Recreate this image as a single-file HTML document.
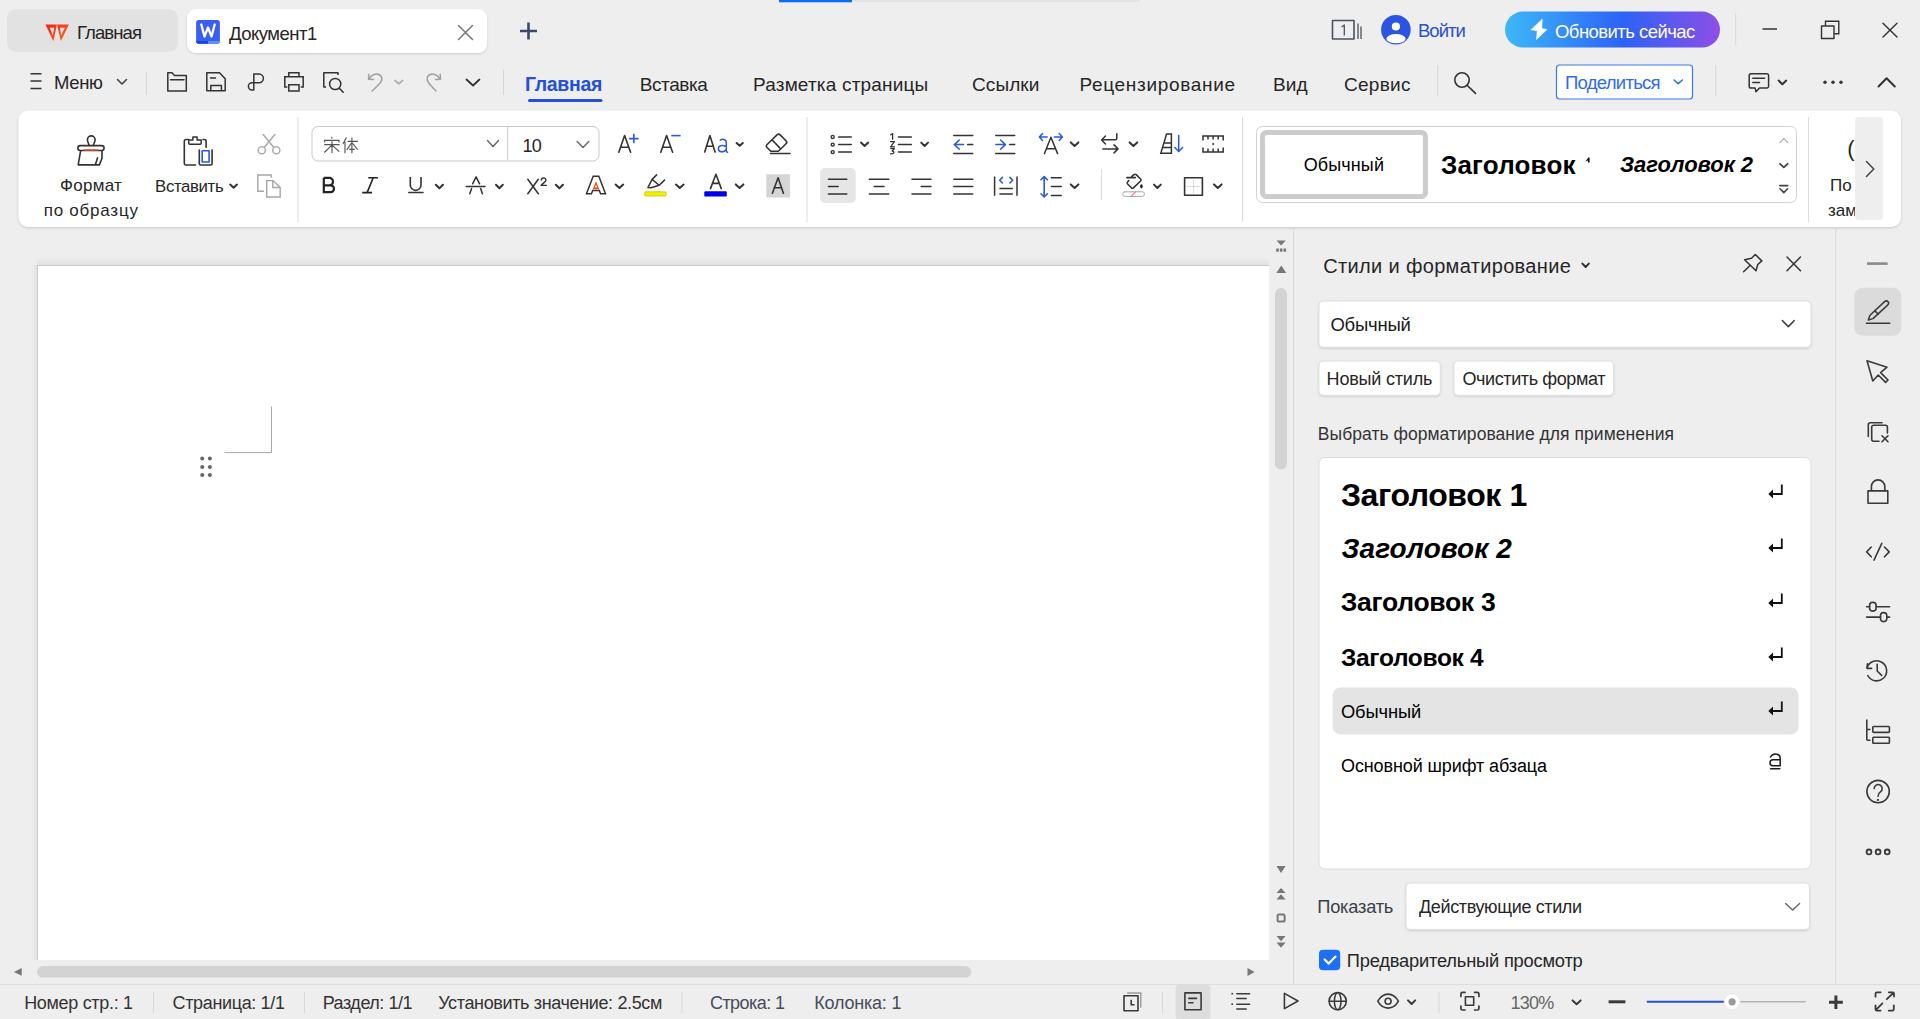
<!DOCTYPE html>
<html><head><meta charset="utf-8"><style>
html,body{margin:0;padding:0;width:1920px;height:1019px;overflow:hidden;background:#eeeeee}
svg{position:absolute;left:0;top:0;display:block}
text{font-family:"Liberation Sans", sans-serif}
</style></head><body>
<svg width="1920" height="1019" viewBox="0 0 1920 1019">
<defs>
  <filter id="sh" x="-5%" y="-20%" width="110%" height="140%">
    <feGaussianBlur in="SourceAlpha" stdDeviation="1.5"/>
    <feOffset dy="1" result="b"/>
    <feComponentTransfer><feFuncA type="linear" slope="0.18"/></feComponentTransfer>
    <feMerge><feMergeNode/><feMergeNode in="SourceGraphic"/></feMerge>
  </filter>
  <filter id="sh2" x="-10%" y="-30%" width="120%" height="160%">
    <feGaussianBlur in="SourceAlpha" stdDeviation="0.8"/>
    <feOffset dy="0.6" result="b"/>
    <feComponentTransfer><feFuncA type="linear" slope="0.15"/></feComponentTransfer>
    <feMerge><feMergeNode/><feMergeNode in="SourceGraphic"/></feMerge>
  </filter>
  <linearGradient id="upd" x1="0" x2="1" y1="0" y2="0">
    <stop offset="0" stop-color="#3cb8f8"/>
    <stop offset="0.55" stop-color="#2d62f6"/>
    <stop offset="1" stop-color="#8d4fe6"/>
  </linearGradient>
  <linearGradient id="wps" x1="0" x2="1" y1="0" y2="1">
    <stop offset="0" stop-color="#f5221b"/>
    <stop offset="1" stop-color="#ff6a1a"/>
  </linearGradient>
  <linearGradient id="pgsh" x1="0" x2="0" y1="0" y2="1">
    <stop offset="0" stop-color="#e4e4e4"/>
    <stop offset="1" stop-color="#eeeeee"/>
  </linearGradient>
  <clipPath id="clipR"><rect x="1812" y="112" width="43" height="112"/></clipPath>
</defs>
<rect x="0" y="0" width="1920" height="1019" fill="#eeeeee"/>
<!-- progress -->
<rect x="779" y="0" width="73" height="2.3" fill="#0b6ef2"/>
<rect x="852" y="0" width="288" height="2" fill="#e3e3e3"/>
<!-- tabs -->
<rect x="7" y="9" width="171" height="43" rx="9" fill="#e2e2e2"/>
<rect x="187" y="9" width="300" height="44" rx="9" fill="#ffffff" filter="url(#sh2)"/>
<!-- ribbon -->
<rect x="18.5" y="110.5" width="1882.5" height="116.5" rx="10" fill="#ffffff" filter="url(#sh)"/>
<!-- doc page -->
<linearGradient id="pgTop" x1="0" x2="0" y1="0" y2="1"><stop offset="0" stop-color="#eeeeee"/><stop offset="1" stop-color="#e2e2e2"/></linearGradient>
<linearGradient id="pgLeft" x1="0" x2="1" y1="0" y2="0"><stop offset="0" stop-color="#eeeeee"/><stop offset="1" stop-color="#e2e2e2"/></linearGradient>
<rect x="37" y="257" width="1232" height="8" fill="url(#pgTop)"/>
<rect x="31" y="265" width="6" height="695" fill="url(#pgLeft)"/>
<rect x="37" y="265" width="1232" height="1" fill="#c9c9c9"/>
<rect x="37" y="265" width="1" height="695" fill="#cbcbcb"/>
<rect x="38" y="266" width="1231" height="694" fill="#ffffff"/>
<!-- v scrollbar -->
<rect x="1275" y="288" width="12" height="181.4" rx="6" fill="#d3d3d3"/>
<!-- h scrollbar -->
<rect x="37" y="966" width="934.4" height="11.6" rx="5.8" fill="#d3d3d3"/>
<!-- separators -->
<rect x="1293" y="227" width="1" height="757" fill="#d9d9d9"/>
<rect x="1835.2" y="227" width="1" height="757" fill="#dadada"/>
<rect x="0" y="984" width="1920" height="1" fill="#dcdcdc"/>
<!-- ribbon separators -->
<rect x="297.5" y="117" width="1" height="105" fill="#dcdcdc"/>
<rect x="806.5" y="117" width="1" height="105" fill="#dcdcdc"/>
<rect x="1242" y="117" width="1" height="105" fill="#dcdcdc"/>
<rect x="1808" y="117" width="1" height="105" fill="#dcdcdc"/>
<rect x="1101" y="169" width="1" height="31" fill="#dddddd"/>
<!-- row2 separators -->
<rect x="146" y="72" width="1" height="23" fill="#d6d6d6"/>
<rect x="503" y="70" width="1" height="25" fill="#d6d6d6"/>
<rect x="1437.2" y="65" width="1" height="31" fill="#d6d6d6"/>
<rect x="1715.2" y="65" width="1" height="31" fill="#d6d6d6"/>
<rect x="1735.2" y="13" width="1" height="32" fill="#d6d6d6"/>
<!-- status separators -->
<rect x="153" y="992" width="1" height="21" fill="#d8d8d8"/>
<rect x="304" y="992" width="1" height="21" fill="#d8d8d8"/>
<rect x="681.5" y="992" width="1" height="21" fill="#d8d8d8"/>
<rect x="1162" y="992" width="1" height="21" fill="#d8d8d8"/>
<rect x="1438.5" y="992" width="1" height="21" fill="#d8d8d8"/>
<!-- font combo -->
<rect x="312" y="126.5" width="287" height="34.5" rx="6" fill="#ffffff" stroke="#c9c9c9" stroke-width="1"/>
<rect x="507.2" y="127" width="1" height="33.5" fill="#c9c9c9"/>
<!-- align-left highlight -->
<rect x="820" y="168" width="35.7" height="35" rx="5" fill="#e6e6e6"/>
<!-- shaded A bg -->
<rect x="766.3" y="174.2" width="23.7" height="23.3" fill="#d5d5d5"/>
<!-- gallery -->
<rect x="1256.5" y="126.5" width="540" height="76" rx="6" fill="#ffffff" stroke="#d2d2d2" stroke-width="1"/>
<rect x="1262.5" y="132.5" width="163" height="64" rx="4" fill="#ffffff" stroke="#cccccc" stroke-width="5"/>
<!-- ribbon scroll btn -->
<rect x="1855" y="117" width="28" height="103" rx="4" fill="#eeeeee"/>
<!-- update btn -->
<rect x="1505" y="11.6" width="215" height="36" rx="18" fill="url(#upd)"/>
<!-- share btn -->
<rect x="1556.5" y="65" width="136" height="34" rx="3" fill="#ffffff" stroke="#3a78f2" stroke-width="1.2"/>
<!-- panel dropdown -->
<rect x="1319" y="301" width="492" height="46.2" rx="4" fill="#ffffff" stroke="#dddddd" stroke-width="1" filter="url(#sh2)"/>
<rect x="1319" y="361" width="121.3" height="34.2" rx="4" fill="#ffffff" stroke="#e0e0e0" stroke-width="1" filter="url(#sh2)"/>
<rect x="1454" y="361" width="159.5" height="34.2" rx="4" fill="#ffffff" stroke="#e0e0e0" stroke-width="1" filter="url(#sh2)"/>
<rect x="1319" y="457.5" width="492" height="411.5" rx="6" fill="#ffffff" stroke="#dcdcdc" stroke-width="1"/>
<rect x="1332.6" y="687.4" width="466" height="47" rx="8" fill="#e4e4e4"/>
<rect x="1406" y="883" width="403.6" height="46.4" rx="4" fill="#ffffff" stroke="#dddddd" stroke-width="1" filter="url(#sh2)"/>
<rect x="1319" y="949.7" width="21.2" height="20.5" rx="4" fill="#1d6ff5"/>
<!-- right sidebar highlight -->
<rect x="1854.4" y="287.8" width="46.8" height="47.9" rx="8" fill="#dbdbdb"/>
<!-- status highlight -->
<rect x="1175.5" y="985" width="35" height="34" rx="4" fill="#dddddd"/>

<g fill="none" stroke-linecap="round" stroke-linejoin="round">
<!-- WPS logo -->
<path d="M45.4,24.4 H56.9 L53.4,41.2 Z M49.8,27.7 L52.8,35.4 L54.3,27.7 Z M57.1,24.4 H68.9 L60.8,41.2 Z M60,27.7 L61.1,35.6 L64.9,27.7 Z" fill="url(#wps)" fill-rule="evenodd" stroke="none"/>
<!-- W doc icon -->
<rect x="196.1" y="20.1" width="23.8" height="23.7" rx="2.8" fill="#3b5ff6" stroke="none"/>
<path d="M196.1,41 H208 V43.8 H199 A2.8,2.8 0 0 1 196.1,41 Z" fill="#1747dc" stroke="none"/>
<path d="M208,41 H219.9 A2.8,2.8 0 0 1 217,43.8 H208 Z" fill="#5b93fa" stroke="none"/>
<path d="M201.3,24.5 L204.5,36.5 L208,27.5 L211.5,36.5 L214.7,24.5" stroke="#ffffff" stroke-width="2.3"/>
<!-- tab close -->
<path d="M458.5,25.5 L472.5,39.5 M472.5,25.5 L458.5,39.5" stroke="#777777" stroke-width="1.5"/>
<!-- plus -->
<path d="M528.5,22.5 V39.5 M520,31 H537" stroke="#3b4a66" stroke-width="2.6" stroke-linecap="butt"/>
<!-- hamburger -->
<path d="M30.5,73.8 H41.5 M30.5,81 H41.5 M30.5,88.5 H41.5" stroke="#333333" stroke-width="1.6" stroke-linecap="butt"/>
<path d="M117.5,79.5 L122,84 L126.5,79.5" stroke="#444444" stroke-width="1.6"/>
<!-- folder -->
<path d="M167.8,91 V72.8 H172 L174.5,75.5 H186.3 V91 Z M170.5,79.8 H184" stroke="#333333" stroke-width="1.5"/>
<!-- save -->
<path d="M206.8,72.8 H219.5 L225.2,78.8 V90.8 H206.8 Z M210.8,90.8 V85.6 H221.4 V90.8 M210.5,78 H215.5" stroke="#333333" stroke-width="1.5"/>
<!-- link -->
<path d="M253.8,90 V73.9 H259 A4.4,4.4 0 0 1 259,82.7 H252 A3.6,3.6 0 0 0 252,89.9 H253.8" stroke="#333333" stroke-width="1.5"/>
<!-- print -->
<path d="M286.8,87 H284.8 V76.8 H303.2 V87 H301.2 M288.8,76.8 V72.8 H299 V76.8 M288.8,84.8 H299 V91 H288.8 Z" stroke="#333333" stroke-width="1.5" stroke-linejoin="miter"/>
<!-- preview -->
<path d="M338,75 V72.8 H323.8 V87 H326" stroke="#333333" stroke-width="1.5" stroke-linecap="butt"/>
<circle cx="335.2" cy="84" r="5.6" stroke="#333333" stroke-width="1.5"/>
<path d="M339.3,88.2 L343.2,92.2" stroke="#333333" stroke-width="1.6"/>
<!-- undo -->
<path d="M369.5,78.5 C372,73.5 379,72.5 381.5,77 C383,80 381,83 372,91 M368.8,74.3 L368.5,79.3 L373.5,79.5" stroke="#a0a0a0" stroke-width="1.5"/>
<path d="M395,80.5 L398.8,83.8 L402.5,80.5" stroke="#b0b0b0" stroke-width="1.8"/>
<!-- redo -->
<path d="M439.5,78.5 C437,73.5 430,72.5 427.5,77 C426,80 428,83 436,91 M440.2,74.3 L440.5,79.3 L435.5,79.5" stroke="#a0a0a0" stroke-width="1.5"/>
<path d="M466.5,79.5 L473,85.5 L479.5,79.5" stroke="#333333" stroke-width="1.8"/>
<!-- ribbon tab underline -->
<rect x="528" y="99" width="74.5" height="3" rx="1.5" fill="#2350d8" stroke="none"/>
</g>
<g fill="none" stroke-linecap="round" stroke-linejoin="round" stroke="#333333" stroke-width="1.5">
<!-- ===== top right ===== -->
<rect x="1332.5" y="20.5" width="21.5" height="18.5" stroke="#4a5262" stroke-width="1.6"/>
<path d="M1358,23.5 V39 M1361,26.5 V39" stroke="#4a5262" stroke-width="1.3" stroke-linecap="butt"/>
<path d="M1341.5,27 L1344.3,25 V35.5" stroke="#4a5262" stroke-width="1.3" stroke-linecap="butt"/>
<circle cx="1395.9" cy="29.8" r="14.8" fill="#2b55e0" stroke="none"/>
<circle cx="1395.9" cy="26.5" r="4.1" fill="#ffffff" stroke="none"/>
<ellipse cx="1396" cy="38.7" rx="9.6" ry="4.6" fill="#ffffff" stroke="none"/>
<path d="M1542.2,19.5 L1541.8,28.5 L1547,29.5 L1536.5,39.5 L1537.2,30.8 L1531.2,29.8 Z" fill="#ffffff" stroke="#ffffff" stroke-width="0.6"/>
<path d="M1762.5,29 H1777" stroke="#333333" stroke-width="1.5" stroke-linecap="butt"/>
<path d="M1825.5,25.8 V21.3 H1838.8 V33.8 H1834.2" stroke="#333333" stroke-width="1.4" stroke-linecap="butt" stroke-linejoin="miter"/>
<rect x="1821.5" y="26" width="12.5" height="12.5" stroke="#333333" stroke-width="1.4"/>
<path d="M1883,23.2 L1897,37 M1897,23.2 L1883,37" stroke="#333333" stroke-width="1.4"/>
<!-- share chevron -->
<path d="M1674,80 L1678.2,83.6 L1682.4,80" stroke="#2f6bf0" stroke-width="1.5"/>
<!-- search -->
<circle cx="1462" cy="80" r="7.2" stroke="#333333" stroke-width="1.6"/>
<path d="M1467.3,85.5 L1475.5,93.3" stroke="#333333" stroke-width="1.7"/>
<!-- comment -->
<path d="M1751,73.8 H1766.8 A1.8,1.8 0 0 1 1768.6,75.6 V86.3 A1.8,1.8 0 0 1 1766.8,88.1 H1759.5 L1756,91.8 L1755.1,88.1 H1751 A1.8,1.8 0 0 1 1749.2,86.3 V75.6 A1.8,1.8 0 0 1 1751,73.8 Z" stroke-width="1.5"/>
<path d="M1752.8,78.2 H1764.6 M1752.8,82.5 H1759.5" stroke-width="1.5"/>
<path d="M1778.6,80.6 L1782.4,84.2 L1786.2,80.6" stroke-width="2"/>
<circle cx="1825" cy="82.2" r="1.7" fill="#333333" stroke="none"/>
<circle cx="1833" cy="82.2" r="1.7" fill="#333333" stroke="none"/>
<circle cx="1841" cy="82.2" r="1.7" fill="#333333" stroke="none"/>
<path d="M1878.5,86.5 L1886.6,78.3 L1894.8,86.5" stroke-width="2"/>

<!-- ===== ribbon clipboard ===== -->
<path d="M89.3,145.5 C88.2,143 87.4,141.3 87.4,139.7 A3.85,3.85 0 0 1 95.1,139.7 C95.1,141.3 94.3,143 93.2,145.5" stroke-width="1.6"/>
<path d="M80.3,145.6 H101.6 A2.45,2.45 0 0 1 101.6,150.5 H80.3 A2.45,2.45 0 0 1 80.3,145.6 Z" stroke-width="1.6"/>
<path d="M84,150 H98" stroke="#e0561b" stroke-width="1.3"/>
<path d="M80.6,150.8 L78.2,164.9 H99.4 L102,158.3 V150.8 M97.6,157.8 L95.4,164.6" stroke-width="1.6"/>
<path d="M195.5,165 H186 A1.7,1.7 0 0 1 184.3,163.3 V141.2 A1.7,1.7 0 0 1 186,139.5 H188.4 M203,139.5 H204.5 A1.6,1.6 0 0 1 206.1,141.1 V147.3" stroke-width="1.6"/>
<path d="M188.8,140 H192.9 V137 H197.1 V140 H201.2 V143.3 A0.9,0.9 0 0 1 200.3,144.2 H189.7 A0.9,0.9 0 0 1 188.8,143.3 Z" stroke-width="1.5"/>
<path d="M199.3,150 V163.4 A1.6,1.6 0 0 0 200.9,165 H210.5 A1.6,1.6 0 0 0 212.1,163.4 V150" stroke-width="1.6"/>
<rect x="202.2" y="150.8" width="6.9" height="11.2" stroke="#2a57ea" stroke-width="1.6"/>
<circle cx="261.8" cy="150.2" r="3.6" stroke="#a6a6a6" stroke-width="1.4"/>
<circle cx="276.3" cy="150.2" r="3.6" stroke="#a6a6a6" stroke-width="1.4"/>
<path d="M263.2,134.5 L273.6,147.2 M274.8,134.5 L264.4,147.2" stroke="#a6a6a6" stroke-width="1.4"/>
<path d="M264,191.2 H257.8 V175 H271.2 V177.8" stroke="#a6a6a6" stroke-width="1.4" stroke-linecap="butt" stroke-linejoin="miter"/>
<path d="M266.7,180.6 H273.2 L280.2,187.6 V197 H266.7 Z M272.8,180.8 V187.5 H280" stroke="#a6a6a6" stroke-width="1.4" stroke-linejoin="miter"/>

<path d="M230.2,184.6 L233.6,187.8 L237,184.6" stroke-width="2"/>
<!-- ===== font group ===== -->
<path d="M487.5,140.5 L493,146.5 L498.5,140.5" stroke="#666666" stroke-width="1.4"/>
<path d="M577.2,141.5 L583,147.5 L588.8,141.5" stroke="#666666" stroke-width="1.4"/>
<path d="M618.8,152.3 L624.6,135.6 L630.6,152.3 M621,147.2 H628.3" stroke-width="1.6"/>
<path d="M633.8,133.8 V143.3 M629,138.6 H638.6" stroke="#2a57ea" stroke-width="1.6" stroke-linecap="butt"/>
<path d="M660.8,152.3 L666.6,135.6 L672.6,152.3 M663,147.2 H670.3" stroke-width="1.6"/>
<path d="M671.3,135.6 H680.6" stroke="#2a57ea" stroke-width="1.6" stroke-linecap="butt"/>
<path d="M704.7,152 L709.9,135.6 L715.1,152 M706.5,146.2 H713.3" stroke-width="1.6"/>
<path d="M720.3,140.2 C721.8,138.8 726.2,138.8 726.3,142.5 V150.4 C726.3,151.8 727,152.2 727.6,152.2 M726.3,146.5 C722,144.6 718.4,145.5 718.4,148.8 C718.4,152.5 723.8,153 726.3,149.5" stroke="#2a57ea" stroke-width="1.5"/>
<path d="M736.6,143 L739.7,145.8 L742.8,143" stroke-width="2"/>
<path d="M777,134.9 Q778.6,133.4 780.2,134.9 L786,140.7 Q787.5,142.3 786,143.8 L778.4,151.2 H770.8 L767.1,147.5 Q765.6,146 767.1,144.5 Z M772.3,140 L779.7,147.9" stroke-width="1.6"/>
<path d="M770.5,153.6 H790" stroke-width="1.5"/>
<!-- row 2 -->
<path d="M323.8,177.8 V192.2 H330.6 A3.3,3.3 0 0 0 330.6,185.4 H323.8 M323.8,177.8 H329.2 A3.8,3.8 0 0 1 329.2,185.4" stroke="#222222" stroke-width="2.2" stroke-linejoin="miter" stroke-linecap="butt"/>
<path d="M368.3,177.8 H378 M362.2,192.6 H372 M373.2,177.8 L367.1,192.6" stroke="#222222" stroke-width="1.6" stroke-linecap="butt"/>
<path d="M410.3,177 V185 A5.35,5.35 0 0 0 421,185 V177" stroke-width="1.6" stroke-linecap="butt"/>
<path d="M408.8,192.4 H423" stroke-width="1.5"/>
<path d="M435.8,184.8 L439.4,188.2 L443,184.8" stroke-width="2"/>
<path d="M472.6,183.8 L476.1,176.8 L479.6,183.8 M466.2,186.6 H485 M471.6,188.6 L469.8,193.8 M480.6,188.6 L482.4,193.8" stroke-width="1.5"/>
<path d="M496,184.8 L499.4,188.2 L502.8,184.8" stroke-width="2"/>
<path d="M527.8,179.3 L538.3,193.8 M538.3,179.3 L527.8,193.8" stroke-width="1.5"/>
<path d="M541.3,180 C541.3,177.3 546,177.2 546,180 C546,182 542.5,183.3 541.1,185.4 H546.3" stroke-width="1.4"/>
<path d="M555.8,184.8 L559.4,188.2 L563,184.8" stroke-width="2"/>
<path d="M593.2,176.2 H598.8 L605.5,193.8 H600.6 L599.3,190.5 H592.7 L591.4,193.8 H586.5 Z" stroke-width="1.5" stroke-linejoin="miter"/>
<path d="M596,181.3 L599.3,189.2 H592.7 Z" fill="#e05a1c" stroke="none"/>
<rect x="595.2" y="185.6" width="1.7" height="1.9" fill="#ffffff" stroke="none"/>
<path d="M615.6,184.6 L619.4,188 L623.2,184.6" stroke-width="2"/>
<path d="M656.6,174.9 L652.1,179.4 L647.9,187.6 L651.2,187.8 L659.1,185.3 L664.5,180.1 M652.1,179.4 L659.1,185.3" stroke-width="1.5"/>
<rect x="644.6" y="191.8" width="21.6" height="4.2" rx="1.5" fill="#f5f000" stroke="#c9c400" stroke-width="0.8"/>
<path d="M676,184.6 L679.8,188 L683.6,184.6" stroke-width="2"/>
<path d="M710.5,188.6 L715.9,174.3 L721.3,188.6 M712.3,183.4 H719.5" stroke-width="1.6"/>
<rect x="704.3" y="191.3" width="22.5" height="5.3" rx="1.2" fill="#0000e6" stroke="none"/>
<path d="M735.8,184.4 L739.6,188 L743.4,184.4" stroke-width="2"/>
<path d="M772.4,193.2 L778.1,177.8 L783.4,193.2 M774.2,187.8 H781.6" stroke-width="1.6"/>

<!-- ===== paragraph group ===== -->
<circle cx="832.7" cy="136.9" r="1.5" stroke-width="1.4"/>
<circle cx="832.7" cy="144.6" r="1.5" stroke-width="1.4"/>
<circle cx="832.7" cy="152.1" r="1.5" stroke-width="1.4"/>
<path d="M838.6,136.9 H851.3 M838.6,144.6 H851.3 M838.6,152.1 H851.3" stroke-width="1.5"/>
<path d="M861,142.6 L864.6,146 L868.2,142.6" stroke-width="2"/>
<path d="M890.8,134.8 L892.6,133.6 V139.2 M890.6,141.6 H894.4 L890.6,146.8 H894.6 M890.8,148.6 H894.4 L892.2,151 C894.6,151 894.8,154.3 890.6,153.8" stroke-width="1.3"/>
<path d="M898.4,136.9 H911.3 M898.4,144.6 H911.3 M898.4,152.1 H911.3" stroke-width="1.5"/>
<path d="M921.2,142.6 L924.6,146 L928,142.6" stroke-width="2"/>
<path d="M953.8,135.6 H972.7 M953.8,153.6 H972.7 M967.6,144.6 H972.7" stroke-width="1.5"/>
<path d="M954.2,144.6 H963.6 M959.3,140 L954.4,144.6 L959.3,149.2" stroke="#2a57ea" stroke-width="1.5"/>
<path d="M995.8,135.6 H1014.7 M995.8,153.6 H1014.7 M1009.6,144.6 H1014.7" stroke-width="1.5"/>
<path d="M995.8,144.6 H1005.2 M1000.6,140 L1005.4,144.6 L1000.6,149.2" stroke="#2a57ea" stroke-width="1.5"/>
<path d="M1039.3,137 H1047.2 M1042.5,133.6 L1039.3,137 L1042.5,140.4 M1054.4,137 H1062.4 M1059.2,133.6 L1062.4,137 L1059.2,140.4" stroke="#2a57ea" stroke-width="1.5"/>
<path d="M1044.5,153.6 L1050.9,137.2 L1057.6,153.6 M1046.6,148.8 H1055.4" stroke-width="1.5"/>
<path d="M1070.8,142.4 L1074.6,146 L1078.4,142.4" stroke-width="2"/>
<path d="M1116.8,133.8 V138.2 A1.6,1.6 0 0 1 1115.2,139.8 H1101.8 M1105.5,136 L1101.6,140 L1105.5,144 M1102.8,148.9 H1118 M1114,144.9 L1118,148.9 L1114,152.9" stroke-width="1.5"/>
<path d="M1129.6,142.4 L1133.4,146 L1137.2,142.4" stroke-width="2"/>
<path d="M1166.6,134 H1171.4 V153.3 H1160.8 Z M1163.8,142.9 H1171.4 M1162.8,147.6 H1171.4" stroke-width="1.5" stroke-linejoin="miter"/>
<path d="M1178.7,135.6 V151.6 M1174.8,147.6 L1178.7,151.6 L1182.6,147.6" stroke="#2a57ea" stroke-width="1.5"/>
<path d="M1203,140.5 V136 H1223.2 V140.5 M1203,147.5 V152 H1223.2 V147.5 M1208,136 V139.4 M1213.1,136 V139.4 M1218.2,136 V139.4 M1208,152 V148.6 M1213.1,152 V148.6 M1218.2,152 V148.6 M1213.1,143 V145" stroke-width="1.5" stroke-linecap="butt" stroke-linejoin="miter"/>
<path d="M828.4,179.2 H846.8 M828.4,186.6 H838.2 M828.4,194.1 H846.8" stroke-width="1.5"/>
<path d="M869.4,179.2 H888.8 M874.2,186.6 H884 M869.4,194.1 H888.8" stroke-width="1.5"/>
<path d="M912,179.2 H931 M921.2,186.6 H931 M912,194.1 H931" stroke-width="1.5"/>
<path d="M953.8,179.2 H972.7 M953.8,186.6 H972.7 M953.8,194.1 H972.7" stroke-width="1.5"/>
<path d="M994.6,176.4 V195.7 M1017,176.4 V195.7 M999.4,188.4 H1012.8 M999.4,194.1 H1012.8" stroke-width="1.5" stroke-linecap="butt"/>
<path d="M1002.4,177.4 L999.7,180.2 L1002.4,183 M1009.9,177.4 L1012.6,180.2 L1009.9,183" stroke="#2a57ea" stroke-width="1.6"/>
<path d="M1044.2,176.8 V196.8 M1041,179.8 L1044.2,176.6 L1047.4,179.8 M1041,193.8 L1044.2,197 L1047.4,193.8" stroke="#2a57ea" stroke-width="1.6"/>
<path d="M1051.4,177.8 H1061.2 M1051.4,186.6 H1061.2 M1051.4,195.4 H1061.2" stroke-width="1.5"/>
<path d="M1070.8,184.4 L1074.6,188 L1078.4,184.4" stroke-width="2"/>
<path d="M1126.8,177.6 H1135.4 M1131.8,176.4 L1134,174.6 Q1135.1,173.8 1136.2,174.6 L1140.6,179 Q1141.5,180 1140.6,181 L1133.4,187.8 Q1132.4,188.7 1131.4,187.8 L1127.6,184 Q1126.6,183 1127.6,182 L1128.8,180.6" stroke-width="1.6"/>
<ellipse cx="1141.4" cy="186.3" rx="1.3" ry="2.1" fill="#222222" stroke="none"/>
<rect x="1122.8" y="191.8" width="21.6" height="4.6" rx="2" stroke="#a8a8a8" stroke-width="1"/>
<path d="M1131.3,196.2 L1135.5,191.9" stroke="#e8404a" stroke-width="1"/>
<path d="M1154,184.6 L1157.4,188 L1160.8,184.6" stroke-width="2"/>
<rect x="1184.6" y="177.8" width="17.8" height="17.4" stroke-width="1.6"/>
<path d="M1193.5,180.5 V193 M1187.2,186.5 H1199.8" stroke="#c8c8c8" stroke-width="0.8" stroke-dasharray="1.2,1.2"/>
<path d="M1214,184.4 L1217.8,188 L1221.6,184.4" stroke-width="2"/>

<!-- gallery arrows -->
<path d="M1780,142.4 L1783.8,138.4 L1787.6,142.4" stroke="#bbbbbb" stroke-width="1.5"/>
<path d="M1780,163.8 L1783.8,167.4 L1787.6,163.8" stroke="#444444" stroke-width="1.8"/>
<path d="M1779.8,185.6 H1787.8 M1780,188.8 L1783.8,192.6 L1787.6,188.8" stroke="#444444" stroke-width="1.6"/>
<path d="M1866.5,161.5 L1873.8,169 L1866.5,176.5" stroke="#444444" stroke-width="1.5"/>

<!-- ===== panel ===== -->
<path d="M1582.4,263.6 L1585.6,267 L1588.8,263.6" stroke-width="2"/>
<path d="M1755.3,254.5 L1761.8,260.9 L1757.8,264.5 L1756,270.8 L1744.6,259.8 L1751.5,258.2 Z M1750,265.5 L1743.6,271.8" stroke-width="1.5"/>
<path d="M1787,257 L1800.5,270.8 M1800.5,257 L1787,270.8" stroke-width="1.5"/>
<path d="M1782.4,320.6 L1788.3,326.6 L1794.2,320.6" stroke="#444444" stroke-width="1.5"/>
<path d="M1785.6,903.4 L1792.6,910 L1799.6,903.4" stroke="#666666" stroke-width="1.4"/>
<path d="M1324.6,959.5 L1328.7,963.6 L1335.5,956.6" stroke="#ffffff" stroke-width="2.2"/>
<path d="M1770.5,757 C1771.6,754.9 1773.4,753.9 1775.3,753.9 C1778.4,753.9 1780.2,755.8 1780.2,758.6 V765.8 M1780.2,759.8 H1773 A3,3 0 0 0 1773,765.8 H1780.2 M1770.6,768.7 H1779.8" stroke="#1a1a1a" stroke-width="1.5"/>
</g>
<g fill="#111111" stroke="#111111" stroke-width="1.8" stroke-linecap="butt">
<path d="M1781.8,484.6 V494 H1771.5" fill="none"/><path d="M1768.3,494 L1773,489.6 V498.4 Z" stroke="none"/>
<path d="M1781.8,538.6 V548 H1771.5" fill="none"/><path d="M1768.3,548 L1773,543.6 V552.4 Z" stroke="none"/>
<path d="M1781.8,593.6 V603 H1771.5" fill="none"/><path d="M1768.3,603 L1773,598.6 V607.4 Z" stroke="none"/>
<path d="M1781.8,647.6 V657 H1771.5" fill="none"/><path d="M1768.3,657 L1773,652.6 V661.4 Z" stroke="none"/>
<path d="M1781.8,701.6 V711 H1771.5" fill="none"/><path d="M1768.3,711 L1773,706.6 V715.4 Z" stroke="none"/>
</g>
<g fill="none" stroke-linecap="round" stroke-linejoin="round" stroke="#3a3a3a" stroke-width="1.5">
<!-- ===== right sidebar ===== -->
<path d="M1867,263.6 H1887.6" stroke="#8a8a8a" stroke-width="2.6" stroke-linecap="butt"/>
<path d="M1868.3,320 L1870,315.2 L1884.6,301.6 Q1886.6,300 1888.1,301.8 Q1889.4,303.5 1887.6,305.1 L1873,318.6 Z M1874.6,310.6 L1878.4,314.2" stroke-width="1.5"/>
<path d="M1866.4,323.2 H1889.8" stroke-width="1.5"/>
<path d="M1867,360.8 L1887,367.2 L1880.6,372.6 L1888,380 L1885.6,382.4 L1878.2,375 L1872.8,381 Z" stroke-width="1.6"/>
<path d="M1868.3,436.5 V424.8 A2,2 0 0 1 1870.3,422.8 H1882" stroke-width="1.6"/>
<path d="M1879,441.2 H1873.6 A1.9,1.9 0 0 1 1871.7,439.3 V427.1 A1.9,1.9 0 0 1 1873.6,425.2 H1885.5 A1.9,1.9 0 0 1 1887.4,427.1 V433" stroke-width="1.6"/>
<path d="M1882,435.8 L1888,441.8 M1888,435.8 L1882,441.8" stroke-width="1.6"/>
<path d="M1871.4,490.6 V486.6 A6.7,6.7 0 0 1 1884.8,486.6 V490.6" stroke-width="1.6"/>
<rect x="1868" y="490.9" width="19.8" height="12.3" stroke-width="1.6"/>
<path d="M1871.25,547 L1866.6,551.9 L1871.25,556.8 M1884.5,547 L1889.2,551.9 L1884.5,556.8 M1881.8,543.3 L1874,560.1" stroke-width="1.6"/>
<path d="M1866.6,606.7 H1869.6 M1876.2,606.7 H1889.6 M1866.6,617.1 H1880.6 M1886.8,617.1 H1889.6" stroke-width="1.6"/>
<rect x="1869.6" y="602.4" width="6.5" height="8.7" rx="3" stroke-width="1.6"/>
<rect x="1880.5" y="612.6" width="6.3" height="9" rx="3" stroke-width="1.6"/>
<path d="M1867.2,667.5 A10,10 0 1 1 1867.8,675.5" stroke-width="1.6"/>
<path d="M1867.4,663.8 L1867,668.4 L1871.6,668.4" stroke-width="1.6"/>
<path d="M1877.2,664.2 V671 L1881.6,675.4" stroke-width="1.6"/>
<path d="M1866.8,719.6 V740.2 M1866.8,729.5 H1870.5 M1866.8,740.2 H1870.5" stroke-width="1.6" stroke-linecap="butt"/>
<rect x="1872.8" y="726.5" width="16.6" height="5.9" rx="0.8" stroke-width="1.6"/>
<rect x="1872.8" y="737.3" width="16.6" height="5.9" rx="0.8" stroke-width="1.6"/>
<circle cx="1878.1" cy="791.6" r="11.2" stroke-width="1.6"/>
<path d="M1874.2,788.6 A4,4 0 1 1 1880.4,791.9 C1878.6,793 1878.1,794.2 1878.1,796.3" stroke-width="1.6"/>
<circle cx="1877.9" cy="799.9" r="1.1" fill="#3a3a3a" stroke="none"/>
<circle cx="1869" cy="851.9" r="2.4" stroke-width="1.8"/>
<circle cx="1878.1" cy="851.9" r="2.4" stroke-width="1.8"/>
<circle cx="1887.2" cy="851.9" r="2.4" stroke-width="1.8"/>

<!-- ===== status bar ===== -->
<path d="M1127.2,993 H1140.8 V1007.4" stroke="#9a9a9a" stroke-width="1.4" stroke-linecap="butt" stroke-linejoin="miter"/>
<rect x="1124" y="995.8" width="14" height="15" stroke-width="1.6"/>
<path d="M1131.2,999.8 V1004.8 H1134.6" stroke-width="1.6" stroke-linecap="butt" stroke-linejoin="miter"/>
<rect x="1184.9" y="992.9" width="16.2" height="16.9" stroke-width="1.6"/>
<path d="M1188.8,998.4 H1196.5 M1188.8,1002.8 H1193" stroke-width="1.6"/>
<path d="M1236.8,993.7 H1249.6 M1236.8,998.4 H1246.2 M1236.8,1004.2 H1249.6 M1236.8,1009 H1246.2" stroke-width="1.5"/>
<circle cx="1232.2" cy="993.7" r="0.9" fill="#3a3a3a" stroke="none"/>
<circle cx="1232.2" cy="1004.2" r="0.9" fill="#3a3a3a" stroke="none"/>
<path d="M1284.4,993.4 L1298,1001 L1284.4,1008.6 Z" stroke-width="1.6"/>
<circle cx="1337.7" cy="1001.2" r="8.6" stroke-width="1.6"/>
<ellipse cx="1337.7" cy="1001.2" rx="3.3" ry="8.6" stroke-width="1.5"/>
<path d="M1329.1,1001.2 H1346.3" stroke-width="1.5"/>
<path d="M1377.8,1001.2 C1380.5,996.2 1384,994.1 1388.1,994.1 C1392.2,994.1 1395.7,996.2 1398.4,1001.2 C1395.7,1006.2 1392.2,1008.1 1388.1,1008.1 C1384,1008.1 1380.5,1006.2 1377.8,1001.2 Z" stroke-width="1.6"/>
<circle cx="1388.1" cy="1001.2" r="3" stroke-width="1.6"/>
<path d="M1408,1000.4 L1411.6,1004 L1415.2,1000.4" stroke-width="2"/>
<path d="M1460.9,996.5 V994 A1.6,1.6 0 0 1 1462.5,992.4 H1465 M1474.6,992.4 H1477.3 A1.6,1.6 0 0 1 1478.9,994 V996.5 M1478.9,1006 V1008.4 A1.6,1.6 0 0 1 1477.3,1010 H1474.6 M1465,1010 H1462.5 A1.6,1.6 0 0 1 1460.9,1008.4 V1006" stroke-width="1.7"/>
<rect x="1465.4" y="996.7" width="8.3" height="8.6" stroke-width="1.6"/>
<path d="M1572.6,1000.4 L1576.6,1004.2 L1580.6,1000.4" stroke-width="2"/>
<path d="M1608.6,1001.8 H1625.4" stroke-width="3" stroke-linecap="butt"/>
<path d="M1646.8,1001.8 H1724.4" stroke="#2050d8" stroke-width="2" stroke-linecap="butt"/>
<path d="M1724.4,1001.8 H1806" stroke="#b4b4b4" stroke-width="1.4" stroke-linecap="butt"/>
<circle cx="1732.1" cy="1001.8" r="8" fill="#ffffff" stroke="#e6e6e6" stroke-width="0.8"/>
<circle cx="1732.1" cy="1001.8" r="3.6" fill="#9a9a9a" stroke="none"/>
<path d="M1835.9,995.4 V1009 M1829,1002.2 H1842.8" stroke-width="3" stroke-linecap="butt"/>
<path d="M1875.5,996.7 V993.8 Q1875.5,992.3 1877,992.3 H1880.6 M1888.8,992.3 H1892.5 Q1894,992.3 1894,993.8 V996.6 M1893.4,992.8 L1886.8,999.2 M1882.4,1003.4 L1876.2,1009.6 M1875.5,1005.4 V1009 Q1875.5,1010.6 1877,1010.6 H1880.6 M1893.8,1005.3 V1009 Q1893.8,1010.6 1892.3,1010.6 H1888.7" stroke-width="1.8"/>
</g>
<!-- scroll triangles -->
<g fill="#777777" stroke="none">
<path d="M1276.5,240.5 H1285.8 L1281.15,245.6 Z"/>
<rect x="1276.2" y="248.5" width="2.6" height="3.2"/><rect x="1279.9" y="248.5" width="2.6" height="3.2"/><rect x="1283.5" y="248.5" width="2.6" height="3.2"/>
<path d="M1281.3,265.5 L1286.3,273 H1276.3 Z"/>
<path d="M1276.5,866 H1285.6 L1281.05,873 Z"/>
<path d="M1281.05,888 L1285.6,893 H1276.5 Z M1281.05,894.2 L1285.6,899.6 H1276.5 Z"/>
<path d="M1276.5,936 H1285.6 L1281.05,941.2 Z M1276.5,942.5 H1285.6 L1281.05,947.8 Z"/>
<path d="M14,972 L21.7,968 V975.8 Z"/>
<path d="M1254.6,972 L1247.5,968 V976 Z"/>
</g>
<rect x="1277.6" y="914.6" width="7" height="7" rx="1.2" fill="none" stroke="#777777" stroke-width="2"/>
<!-- margin mark + drag handle -->
<path d="M271.5,406.5 V452.6 H224.5" fill="none" stroke="#a8a8a8" stroke-width="1"/>
<g fill="#666666">
<circle cx="202.2" cy="458.6" r="2"/><circle cx="209.9" cy="458.6" r="2"/>
<circle cx="202.2" cy="467" r="2"/><circle cx="209.9" cy="467" r="2"/>
<circle cx="202.2" cy="475" r="2"/><circle cx="209.9" cy="475" r="2"/>
</g>
<g fill="none" stroke="#555555" stroke-width="1.15" stroke-linecap="butt">
<path d="M331.7,136.8 V138.6 M324.6,142.6 V140.4 H339 V142.4 M324.2,144.6 H339.6 M332,141.2 V153 M331.6,145.4 L324.3,152.5 M332.4,145.4 L339.3,151.6"/>
<path d="M346.4,137.4 L343,144 M345,141.8 V153.2 M347.6,141.4 H357.9 M351.9,137.4 V153.2 M351.5,143 L346.8,149.8 M352.3,143 L357.6,149.6 M349.2,149.3 H354.8"/>
</g>
<path d="M1585.4,161.6 L1588.4,157.4 H1589.6 V162.4 H1588 V160.4 Z" fill="#111111"/>

<g>
<text x="77.00" y="39.00" font-size="18.5" fill="#262626" style="letter-spacing:-0.899px">Главная</text>
<text x="229.00" y="39.50" font-size="18.5" fill="#262626" style="letter-spacing:-0.508px">Документ1</text>
<text x="54.00" y="89.00" font-size="18.5" fill="#262626" style="letter-spacing:-0.375px">Меню</text>
<text x="525.00" y="91.00" font-size="19.5" font-weight="bold" fill="#2350d8" style="letter-spacing:-0.321px">Главная</text>
<text x="639.80" y="91.00" font-size="19" fill="#262626" style="letter-spacing:-0.425px">Вставка</text>
<text x="753.00" y="91.00" font-size="19" fill="#262626" style="letter-spacing:0.175px">Разметка страницы</text>
<text x="972.00" y="91.00" font-size="19" fill="#262626" style="letter-spacing:0.095px">Ссылки</text>
<text x="1079.50" y="91.00" font-size="19" fill="#262626" style="letter-spacing:0.681px">Рецензирование</text>
<text x="1273.00" y="91.00" font-size="19" fill="#262626" style="letter-spacing:0.107px">Вид</text>
<text x="1344.00" y="91.00" font-size="19" fill="#262626" style="letter-spacing:0.288px">Сервис</text>
<text x="1418.00" y="37.00" font-size="18.5" fill="#2b4fd0" style="letter-spacing:-0.984px">Войти</text>
<text x="1555.00" y="37.50" font-size="18.5" fill="#ffffff" style="letter-spacing:-0.550px">Обновить сейчас</text>
<text x="1565.00" y="89.00" font-size="18.5" fill="#2f6bf0" style="letter-spacing:-0.727px">Поделиться</text>
<text x="60.00" y="191.00" font-size="17" fill="#262626" style="letter-spacing:0.280px">Формат</text>
<text x="43.70" y="215.80" font-size="17" fill="#262626" style="letter-spacing:0.764px">по образцу</text>
<text x="155.10" y="192.40" font-size="16.8" fill="#262626" style="letter-spacing:-0.370px">Вставить</text>
<text x="522.40" y="152.00" font-size="18" fill="#262626" style="letter-spacing:-0.711px">10</text>
<text x="1303.70" y="171.00" font-size="18" fill="#000000" style="letter-spacing:0.116px">Обычный</text>
<text x="1441.00" y="174.00" font-size="26" font-weight="bold" fill="#000000" style="letter-spacing:0.182px">Заголовок</text>
<text x="1620.00" y="172.00" font-size="22" font-weight="bold" font-style="italic" fill="#000000" style="letter-spacing:-0.048px">Заголовок 2</text>
<text x="1847.30" y="156.00" font-size="22" clip-path="url(#clipR)" fill="#262626" style="letter-spacing:0.000px">(</text>
<text x="1830.00" y="191.00" font-size="17" clip-path="url(#clipR)" fill="#262626" style="letter-spacing:0.000px">По</text>
<text x="1828.00" y="215.80" font-size="17" clip-path="url(#clipR)" fill="#262626" style="letter-spacing:0.000px">зам</text>
<text x="1323.30" y="273.00" font-size="20" fill="#262626" style="letter-spacing:0.335px">Стили и форматирование</text>
<text x="1330.40" y="331.00" font-size="18.5" fill="#1a1a1a" style="letter-spacing:-0.222px">Обычный</text>
<text x="1326.60" y="385.00" font-size="18" fill="#262626" style="letter-spacing:-0.197px">Новый стиль</text>
<text x="1462.40" y="385.00" font-size="18" fill="#262626" style="letter-spacing:-0.384px">Очистить формат</text>
<text x="1317.80" y="440.40" font-size="17.5" fill="#333333" style="letter-spacing:0.046px">Выбрать форматирование для применения</text>
<text x="1340.90" y="506.00" font-size="32" font-weight="bold" fill="#000000" style="letter-spacing:-0.416px">Заголовок 1</text>
<text x="1341.50" y="558.00" font-size="28" font-weight="bold" font-style="italic" fill="#000000" style="letter-spacing:0.034px">Заголовок 2</text>
<text x="1340.80" y="611.00" font-size="26.5" font-weight="bold" fill="#000000" style="letter-spacing:-0.288px">Заголовок 3</text>
<text x="1341.00" y="666.00" font-size="24.5" font-weight="bold" fill="#000000" style="letter-spacing:-0.319px">Заголовок 4</text>
<text x="1341.00" y="718.00" font-size="18.3" fill="#000000" style="letter-spacing:-0.098px">Обычный</text>
<text x="1341.00" y="772.00" font-size="18" fill="#000000" style="letter-spacing:-0.109px">Основной шрифт абзаца</text>
<text x="1317.30" y="913.00" font-size="18.3" fill="#3a3f4a" style="letter-spacing:-0.241px">Показать</text>
<text x="1419.00" y="913.00" font-size="18" fill="#262626" style="letter-spacing:-0.365px">Действующие стили</text>
<text x="1346.80" y="967.00" font-size="18.3" fill="#262626" style="letter-spacing:-0.196px">Предварительный просмотр</text>
<text x="24.20" y="1008.60" font-size="18" fill="#333333" style="letter-spacing:-0.322px">Номер стр.: 1</text>
<text x="172.60" y="1008.60" font-size="18" fill="#333333" style="letter-spacing:-0.358px">Страница: 1/1</text>
<text x="322.70" y="1008.60" font-size="18" fill="#333333" style="letter-spacing:-0.471px">Раздел: 1/1</text>
<text x="438.20" y="1008.60" font-size="18" fill="#333333" style="letter-spacing:-0.356px">Установить значение: 2.5см</text>
<text x="710.00" y="1008.60" font-size="18" fill="#454c5a" style="letter-spacing:-0.568px">Строка: 1</text>
<text x="814.20" y="1008.60" font-size="18" fill="#454c5a" style="letter-spacing:-0.204px">Колонка: 1</text>
<text x="1510.40" y="1009.00" font-size="18" fill="#666666" style="letter-spacing:-0.711px">130%</text>
</g>
</svg>
</body></html>
